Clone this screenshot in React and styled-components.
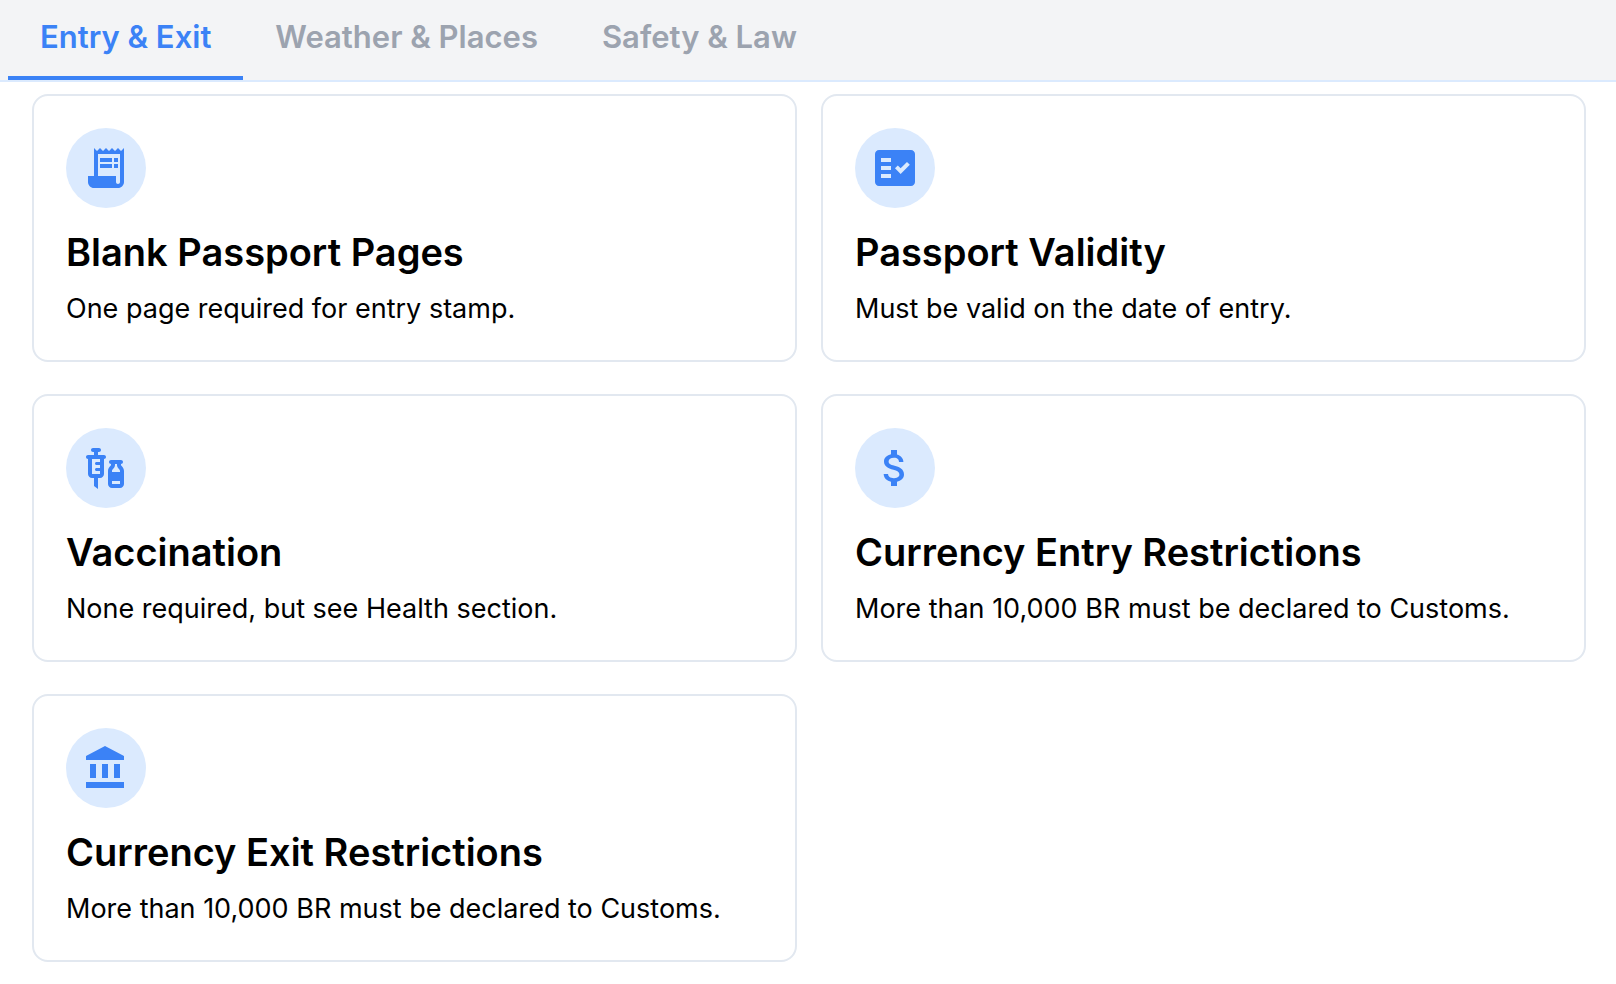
import { useState } from "react";
import styled, { createGlobalStyle } from "styled-components";
import {
  MdReceiptLong,
  MdFactCheck,
  MdVaccines,
  MdAttachMoney,
} from "react-icons/md";

const BankIcon = () => (
  <svg viewBox="0 0 24 24" width="1em" height="1em" fill="currentColor">
    <path d="M4 10v7h3v-7H4zm6 0v7h3v-7h-3zM2 22h19v-3H2v3zm14-12v7h3v-7h-3zm-4.5-9L2 6v2h19V6l-9.5-5z" />
  </svg>
);

const tabs = ["Entry & Exit", "Weather & Places", "Safety & Law"];

const cards = [
  {
    icon: MdReceiptLong,
    title: "Blank Passport Pages",
    text: "One page required for entry stamp.",
  },
  {
    icon: MdFactCheck,
    title: "Passport Validity",
    text: "Must be valid on the date of entry.",
  },
  {
    icon: MdVaccines,
    title: "Vaccination",
    text: "None required, but see Health section.",
  },
  {
    icon: MdAttachMoney,
    title: "Currency Entry Restrictions",
    text: "More than 10,000 BR must be declared to Customs.",
  },
  {
    icon: BankIcon,
    title: "Currency Exit Restrictions",
    text: "More than 10,000 BR must be declared to Customs.",
  },
];

function App() {
  const [active, setActive] = useState(tabs[0]);

  return (
    <>
      <GlobalStyle />
      <TabBar>
        {tabs.map((tab) => (
          <Tab
            key={tab}
            type="button"
            $active={tab === active}
            onClick={() => setActive(tab)}
          >
            {tab}
          </Tab>
        ))}
      </TabBar>
      <CardGrid>
        {cards.map(({ icon: Icon, title, text }) => (
          <Card key={title}>
            <IconCircle>
              <Icon />
            </IconCircle>
            <CardHeading>{title}</CardHeading>
            <CardText>{text}</CardText>
          </Card>
        ))}
      </CardGrid>
    </>
  );
}

const GlobalStyle = createGlobalStyle`
  * {
    box-sizing: border-box;
    margin: 0;
    padding: 0;
  }

  body {
    background: #fff;
    color: #000;
    font-family: Inter, "Liberation Sans", sans-serif;
  }
`;

const TabBar = styled.nav`
  display: flex;
  padding: 0 8px;
  background: #f3f4f6;
  border-bottom: 2px solid #dbeafe;
`;

const Tab = styled.button`
  height: 80px;
  padding: 0 32px 4px;
  background: none;
  border: 0;
  border-bottom: 4px solid ${({ $active }) => ($active ? "#3b82f6" : "transparent")};
  color: ${({ $active }) => ($active ? "#3b82f6" : "#9ca3af")};
  font-family: inherit;
  font-size: 31px;
  font-weight: 600;
  cursor: pointer;
`;

const CardGrid = styled.main`
  display: grid;
  grid-template-columns: 1fr 1fr;
  gap: 32px 24px;
  padding: 12px 30px 24px 32px;
`;

const Card = styled.section`
  padding: 32px 32px 30px;
  border: 2px solid #e2e8f0;
  border-radius: 16px;
`;

const IconCircle = styled.div`
  display: flex;
  align-items: center;
  justify-content: center;
  width: 80px;
  height: 80px;
  margin-bottom: 16px;
  border-radius: 50%;
  background: #dbeafe;
  color: #3b82f6;
  font-size: 48px;
`;

const CardHeading = styled.h2`
  font-size: 38px;
  font-weight: 600;
  line-height: 56px;
`;

const CardText = styled.p`
  margin-top: 8px;
  font-size: 27px;
  line-height: 42px;
`;

export default App;
